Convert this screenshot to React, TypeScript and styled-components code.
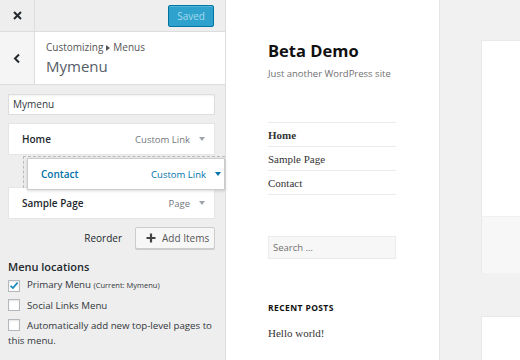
import React from "react";
import styled, { createGlobalStyle } from "styled-components";

const GlobalStyle = createGlobalStyle`
  html, body {
    margin: 0;
    padding: 0;
    width: 520px;
    height: 360px;
    overflow: hidden;
    background: #fff;
  }
  * { box-sizing: border-box; }
`;

const Page = styled.div`
  display: flex;
  width: 520px;
  height: 360px;
  overflow: hidden;
  font-family: "Open Sans", "Noto Sans", sans-serif;
`;

/* ---------- customizer sidebar ---------- */

const Sidebar = styled.div`
  width: 226px;
  flex: none;
  background: #eee;
  border-right: 1px solid #ddd;
  display: flex;
  flex-direction: column;
  color: #23282d;
`;

const TopBar = styled.div`
  height: 32px;
  display: flex;
  align-items: center;
  border-bottom: 1px solid #ddd;
  padding-right: 11px;
`;

const CloseButton = styled.div`
  width: 35px;
  height: 31px;
  border-right: 1px solid #ddd;
  display: flex;
  align-items: center;
  justify-content: center;
`;

const SavedButton = styled.div`
  margin-left: auto;
  height: 22px;
  padding: 0 8px;
  display: flex;
  align-items: center;
  background: #2ea2cc;
  border: 1px solid #0074a2;
  border-radius: 2px;
  box-shadow: inset 0 1px 0 rgba(120, 200, 230, 0.5);
  color: #a7d9ef;
  font-size: 10px;
`;

const Header = styled.div`
  height: 53px;
  display: flex;
  border-bottom: 1px solid #ddd;
  background: #fff;
`;

const BackButton = styled.div`
  width: 35px;
  flex: none;
  background: #f5f5f5;
  border-right: 1px solid #ddd;
  display: flex;
  align-items: center;
  justify-content: center;
`;

const HeaderText = styled.div`
  padding: 9px 0 0 11px;
`;

const Crumb = styled.div`
  font-size: 10px;
  color: #555;
  line-height: 13px;
  display: flex;
  align-items: center;
  gap: 3px;
`;

const Title = styled.div`
  font-size: 15px;
  color: #555d66;
  line-height: 22px;
  margin-top: 1px;
`;

const Body = styled.div`
  padding: 9px 10px 0 8px;
  display: flex;
  flex-direction: column;
`;

const NameInput = styled.div`
  height: 21px;
  background: #fff;
  border: 1px solid #ddd;
  box-shadow: inset 0 1px 2px rgba(0, 0, 0, 0.06);
  font-size: 10px;
  line-height: 19px;
  padding-left: 4px;
  color: #32373c;
`;

const ItemList = styled.div`
  margin-top: 8px;
  display: flex;
  flex-direction: column;
`;

const Item = styled.div<{ $active?: boolean; $pull?: number }>`
  height: 32px;
  display: flex;
  align-items: center;
  padding: 0 9px 0 13px;
  margin-top: ${(p) => p.$pull ?? 0}px;
  background: #fff;
  border: 1px solid ${(p) => (p.$active ? "#ccc" : "#e5e5e5")};
  font-size: 10px;
  font-weight: 600;
  color: ${(p) => (p.$active ? "#0073aa" : "#23282d")};
  ${(p) => (p.$active ? "box-shadow: 0 1px 3px rgba(0,0,0,0.15);" : "")}
`;

const ItemType = styled.span<{ $active?: boolean }>`
  margin-left: auto;
  font-weight: 400;
  font-size: 9.5px;
  color: ${(p) => (p.$active ? "#0073aa" : "#72777c")};
`;

const Arrow = styled.span<{ $active?: boolean }>`
  margin-left: 9px;
  width: 0;
  height: 0;
  border-left: 3px solid transparent;
  border-right: 3px solid transparent;
  border-top: 4px solid ${(p) => (p.$active ? "#0073aa" : "#a0a5aa")};
`;

const DropSlot = styled.div`
  height: 32px;
  margin: 1px -10px 0 15px;
  border-top: 1px dashed #bbb;
  border-left: 1px dashed #bbb;
  position: relative;
`;

const DraggedItem = styled(Item)`
  position: absolute;
  left: 3px;
  top: 1px;
  right: 0;
  padding-right: 3px;
  z-index: 2;
`;

const Actions = styled.div`
  margin-top: 8px;
  display: flex;
  align-items: center;
  justify-content: flex-end;
  gap: 13px;
`;

const Reorder = styled.span`
  font-size: 10px;
  color: #23282d;
`;

const AddButton = styled.div`
  height: 22px;
  width: 80px;
  display: flex;
  align-items: center;
  gap: 6px;
  padding-left: 10px;
  background: #f7f7f7;
  border: 1px solid #ccc;
  border-radius: 2px;
  box-shadow: 0 1px 0 #ccc;
  font-size: 10px;
  color: #555;
`;

const SectionTitle = styled.div`
  margin-top: 11px;
  font-size: 11px;
  font-weight: 600;
  color: #23282d;
  line-height: 14px;
`;

const CheckRow = styled.div<{ $gap?: number }>`
  margin-top: ${(p) => p.$gap ?? 6}px;
  font-size: 9.7px;
  line-height: 15px;
  color: #32373c;
`;

const Box = styled.span`
  display: inline-flex;
  vertical-align: -2px;
  width: 12px;
  height: 12px;
  margin-right: 7px;
  background: #fff;
  border: 1px solid #b4b9be;
  box-shadow: inset 0 1px 2px rgba(0, 0, 0, 0.1);
  align-items: center;
  justify-content: center;
`;

const Small = styled.span`
  font-size: 7.5px;
`;

/* ---------- preview ---------- */

const Preview = styled.div`
  flex: 1;
  display: flex;
  background: #f1f1f1;
`;

const SiteSidebar = styled.div`
  width: 214px;
  flex: none;
  background: #fff;
  border-right: 1px solid #e6e6e6;
  padding: 41px 43px 0 42px;
`;

const SiteTitle = styled.div`
  font-size: 16.5px;
  font-weight: 700;
  color: #111;
  line-height: 20px;
`;

const Tagline = styled.div`
  margin-top: 6px;
  font-size: 9.5px;
  color: #707070;
  line-height: 14px;
`;

const Nav = styled.div`
  margin-top: 41px;
  border-top: 1px solid #eaeaea;
`;

const NavItem = styled.div<{ $bold?: boolean }>`
  height: 24px;
  border-bottom: 1px solid #eaeaea;
  font-family: "Liberation Serif", "DejaVu Serif", serif;
  font-size: 11px;
  font-weight: ${(p) => (p.$bold ? 700 : 400)};
  color: #333;
  display: flex;
  align-items: center;
`;

const SearchBox = styled.div`
  margin-top: 41px;
  height: 23px;
  background: #f7f7f7;
  border: 1px solid #eaeaea;
  font-size: 9.5px;
  color: #707070;
  display: flex;
  align-items: center;
  padding-left: 4px;
`;

const WidgetTitle = styled.div`
  margin-top: 43px;
  font-size: 8.5px;
  font-weight: 700;
  letter-spacing: 0.4px;
  color: #111;
`;

const PostLink = styled.div`
  margin-top: 14px;
  font-family: "Liberation Serif", "DejaVu Serif", serif;
  font-size: 11px;
  color: #333;
`;

const Main = styled.div`
  flex: 1;
  padding: 40px 0 0 41px;
  display: flex;
  flex-direction: column;
  gap: 43px;
`;

const Card = styled.div`
  background: #fff;
  border-top: 1px solid #e9e9e9;
  border-left: 1px solid #e9e9e9;
  display: flex;
  flex-direction: column;
`;

const CardBody = styled.div<{ $h: number }>`
  height: ${(p) => p.$h}px;
`;

const CardFooter = styled.div`
  height: 57px;
  background: #f7f7f7;
  border-top: 1px solid #f0f0f0;
`;

const Check = () => (
  <svg width="10" height="9" viewBox="0 0 10 9">
    <path d="M1.5 4.8 L3.9 7 L8.6 1.6" fill="none" stroke="#1e8cbe" strokeWidth="1.8" />
  </svg>
);

export default function App() {
  return (
    <Page>
      <GlobalStyle />
      <Sidebar>
        <TopBar>
          <CloseButton>
            <svg width="9" height="9" viewBox="0 0 9 9">
              <path d="M1 1 L8 8 M8 1 L1 8" stroke="#23282d" strokeWidth="2" />
            </svg>
          </CloseButton>
          <SavedButton>Saved</SavedButton>
        </TopBar>
        <Header>
          <BackButton>
            <svg width="8" height="11" viewBox="0 0 8 11">
              <path d="M6 1.5 L2 5.5 L6 9.5" fill="none" stroke="#23282d" strokeWidth="2" />
            </svg>
          </BackButton>
          <HeaderText>
            <Crumb>
              Customizing
              <svg width="4" height="6" viewBox="0 0 4 6">
                <path d="M0 0 L4 3 L0 6 Z" fill="#555" />
              </svg>
              Menus
            </Crumb>
            <Title>Mymenu</Title>
          </HeaderText>
        </Header>
        <Body>
          <NameInput>Mymenu</NameInput>
          <ItemList>
            <Item>
              Home<ItemType>Custom Link</ItemType>
              <Arrow />
            </Item>
            <DropSlot>
              <DraggedItem $active>
                Contact<ItemType $active>Custom Link</ItemType>
                <Arrow $active />
              </DraggedItem>
            </DropSlot>
            <Item $pull={-1}>
              Sample Page<ItemType>Page</ItemType>
              <Arrow />
            </Item>
          </ItemList>
          <Actions>
            <Reorder>Reorder</Reorder>
            <AddButton>
              <svg width="10" height="10" viewBox="0 0 10 10">
                <path d="M5 0.5 V9.5 M0.5 5 H9.5" stroke="#444" strokeWidth="2.2" />
              </svg>
              Add Items
            </AddButton>
          </Actions>
          <SectionTitle>Menu locations</SectionTitle>
          <CheckRow $gap={3}>
            <Box>
              <Check />
            </Box>
            Primary Menu <Small>(Current: Mymenu)</Small>
          </CheckRow>
          <CheckRow $gap={5}>
            <Box />
            Social Links Menu
          </CheckRow>
          <CheckRow $gap={5}>
            <Box />
            Automatically add new top-level pages to this menu.
          </CheckRow>
        </Body>
      </Sidebar>
      <Preview>
        <SiteSidebar>
          <SiteTitle>Beta Demo</SiteTitle>
          <Tagline>Just another WordPress site</Tagline>
          <Nav>
            <NavItem $bold>Home</NavItem>
            <NavItem>Sample Page</NavItem>
            <NavItem>Contact</NavItem>
          </Nav>
          <SearchBox>Search …</SearchBox>
          <WidgetTitle>RECENT POSTS</WidgetTitle>
          <PostLink>Hello world!</PostLink>
        </SiteSidebar>
        <Main>
          <Card>
            <CardBody $h={175} />
            <CardFooter />
          </Card>
          <Card>
            <CardBody $h={60} />
          </Card>
        </Main>
      </Preview>
    </Page>
  );
}
